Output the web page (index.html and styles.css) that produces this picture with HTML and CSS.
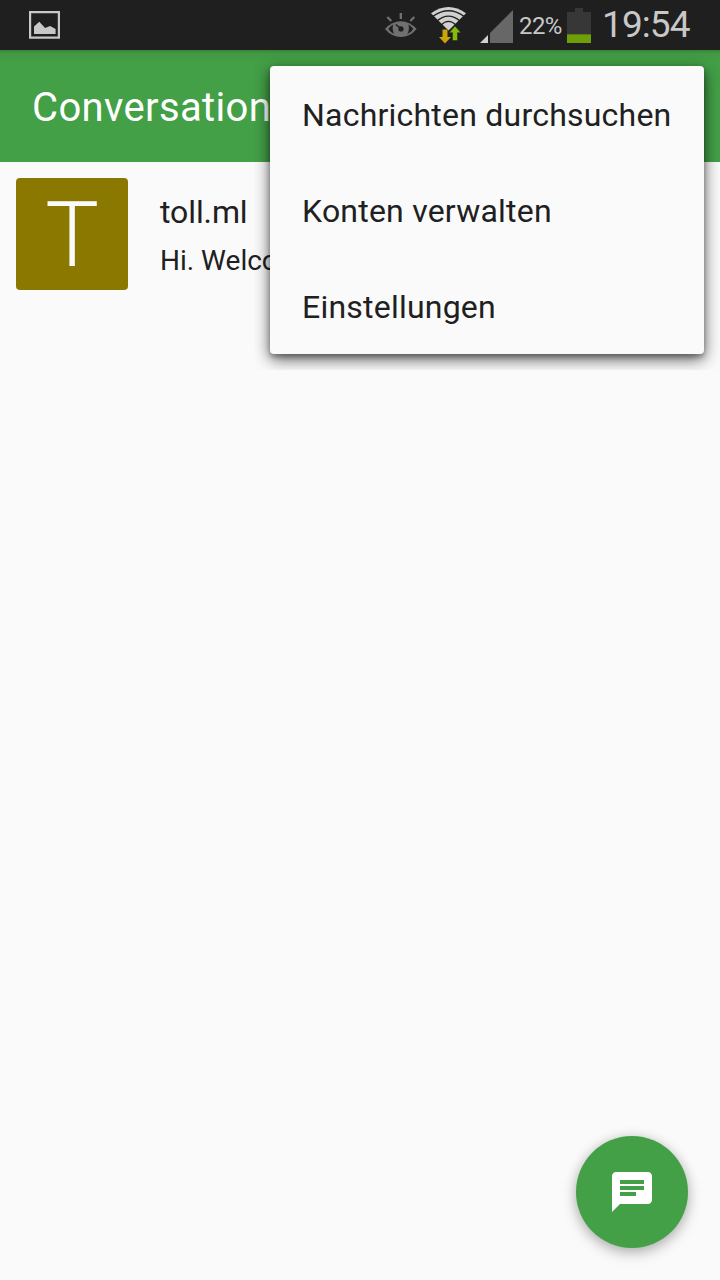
FILE: index.html
```html
<!DOCTYPE html>
<html lang="de">
<head>
<meta charset="utf-8">
<title>Conversations</title>
<link rel="stylesheet" href="styles.css">
</head>
<body>
<div class="screen">
  <header class="status">
    <svg class="status-picture" width="31" height="28" viewBox="0 0 31 28">
      <path fill="none" stroke="#c8c8c8" stroke-width="2.2" d="M1.1 1.1h28.8v25.6H1.1z"/>
      <path fill="#c8c8c8" d="M5 23v-7.500l5.300-4.800 5.800 6.300 5-2 5.500 3V23z"/>
    </svg>
    <div class="status-right">
      <svg class="icon-eye" width="34" height="26" viewBox="0 0 34 26">
        <path fill="none" stroke="#707070" stroke-width="2.400" d="M15.800 0v6M2.300 4l4 4M29.300 4l-4 4"/>
        <path fill="#707070" d="M0 16Q7 8.300 15.800 8.300T31.600 16Q25 24 15.800 24T0 16z"/>
        <path fill="#1f1f1f" d="M8.300 11.500q-3.300 1.500-5 4.500 2 3.200 6 5-2.700-4.700-1-9.500zM23.300 11.500q3.300 1.500 5 4.500-2 3.200-6 5 2.700-4.700 1-9.500z"/>
        <path stroke="#1f1f1f" stroke-width="1.600" d="M10.800 11.500l5 4"/>
        <circle cx="16" cy="15.900" r="2.600" fill="#1f1f1f"/>
      </svg>
      <svg class="icon-wifi" width="36" height="37" viewBox="0 0 36 37">
        <path fill="#d0d0d0" d="M0 6.300Q17.500-6.300 35 6.300L17.500 23.500z"/>
        <g fill="none" stroke="#1f1f1f" stroke-width="1.300">
          <path d="M2 9.300Q17.500-1.800 33 9.300"/>
          <path d="M6 14Q17.500 4.300 29 14"/>
          <path d="M10 18Q17.500 10.800 25 18"/>
        </g>
        <path fill="#c9a30a" d="M11.500 22.500h5v7.500h3.500l-6 6.500-6-6.500h3.500z"/>
        <path fill="#87bb09" stroke="#1f1f1f" stroke-width=".5" d="M24 19l5.900 6.700h-3.400v7.800h-5v-7.800h-3.400z"/>
      </svg>
      <svg class="icon-signal" width="33" height="33" viewBox="0 0 33 33">
        <path fill="#676767" d="M33 0v33H10V23z"/>
        <path fill="#d0d0d0" d="M0 33l8-8v8z"/>
      </svg>
      <span class="percent">22%</span>
      <svg class="icon-battery" width="24" height="35" viewBox="0 0 24 35">
        <path fill="#373737" d="M8 0h8v4h8v22H0V4h8z"/>
        <path fill="#6f9f08" d="M0 26h24v9H0z"/>
        <path fill="#587c10" d="M0 26h24v1H0z"/>
      </svg>
      <span class="clock">19:54</span>
    </div>
  </header>
  <div class="toolbar"><h1 class="title">Conversations</h1></div>
  <main class="list">
    <div class="chat">
      <div class="avatar"><span class="avatar-letter">T</span></div>
      <div class="chat-text">
        <div class="chat-name">toll.ml</div>
        <div class="chat-preview">Hi. Welcome</div>
      </div>
    </div>
  </main>
  <nav class="menu">
    <div class="menu-item"><span>Nachrichten durchsuchen</span></div>
    <div class="menu-item"><span>Konten verwalten</span></div>
    <div class="menu-item"><span>Einstellungen</span></div>
  </nav>
  <button class="fab" aria-label="Neue Unterhaltung">
    <svg width="48" height="48" viewBox="0 0 24 24"><path fill="#fff" d="M20 2H4c-1.100 0-1.990.9-1.990 2L2 22l4-4h14c1.100 0 2-.9 2-2V4c0-1.100-.9-2-2-2zM6 9h12v2H6V9zm8 5H6v-2h8v2zm4-6H6V6h12v2z"/></svg>
  </button>
</div>
</body>
</html>
```
FILE: styles.css
```css
* { box-sizing: border-box; }
body { margin: 0; font-family: Roboto, "Liberation Sans", sans-serif; color: #202020; }
.screen { position: relative; display: flex; flex-direction: column; width: 720px; height: 1280px; background: #fafafa; overflow: hidden; }
.status { display: flex; justify-content: space-between; height: 50px; padding: 11px 29px 0; background: #1f1f1f; color: #c8c8c8; flex: none; }
.status-right { display: flex; align-items: flex-start; margin-top: -11px; }
.icon-eye { margin: 13px 12px 0 0; }
.icon-wifi { margin: 7px 13px 0 0; }
.icon-signal { margin: 10px 6px 0 0; }
.percent { width: 48px; font-size: 24px; line-height: 28px; margin-top: 12px; letter-spacing: -0.6px; }
.icon-battery { margin: 8px 11px 0 0; }
.clock { width: 89px; font-size: 37px; line-height: 44px; margin-top: 3px; letter-spacing: -0.9px; white-space: nowrap; }
.toolbar { height: 112px; padding: 34px 32px 0; background: linear-gradient(#388239 0, #419844 3px, #43a047 12px); flex: none; }
.title { margin: 0; font-size: 40px; font-weight: 400; line-height: 48px; letter-spacing: 0.35px; color: #fff; }
.list { flex: 1; padding: 16px; }
.chat { display: flex; gap: 32px; }
.avatar { display: flex; justify-content: center; width: 112px; height: 112px; padding-top: 2px; border-radius: 4px; background: #8b7800; color: #fafafa; }
.avatar-letter { font-size: 90px; font-weight: 300; line-height: 112px; }
.chat-text { padding-top: 14px; white-space: nowrap; }
.chat-name { font-size: 32px; line-height: 40px; letter-spacing: -0.1px; }
.chat-preview { font-size: 28px; line-height: 36px; margin-top: 11px; }
.menu { position: absolute; top: 66px; left: 270px; width: 434px; height: 288px; border-radius: 4px; background: #fafafa; box-shadow: 0 5px 16px rgba(0,0,0,.65), 0 3px 5px rgba(0,0,0,.25); clip-path: inset(-16px); }
.menu-item { display: flex; align-items: center; height: 96px; padding: 2px 32px 0; font-size: 32px; letter-spacing: 0.22px; white-space: nowrap; }
.fab { position: absolute; left: 576px; top: 1136px; display: flex; align-items: center; justify-content: center; width: 112px; height: 112px; padding: 0; border: 0; border-radius: 50%; background: #43a047; box-shadow: 0 5px 14px rgba(0,0,0,.26), 0 0 12px rgba(0,0,0,.1); }
```
